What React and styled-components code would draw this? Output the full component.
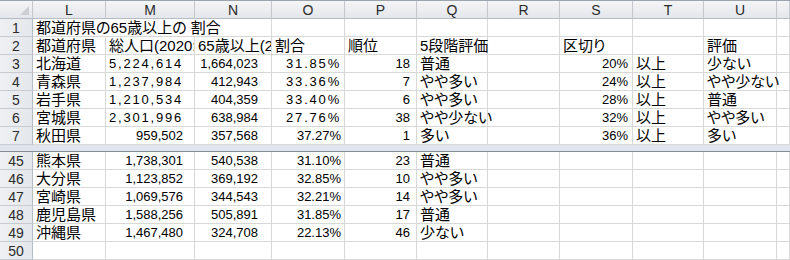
import styled, { createGlobalStyle } from "styled-components";

const COLS = "33px 73px 89px 77px 73px 72px 71px 72px 73px 71px 73px 1fr";
const LETTERS = ["L", "M", "N", "O", "P", "Q", "R", "S", "T", "U", ""];

// padding-right per column (numbers have trailing space formats in M/N)
const PAD = [3, 11, 13, 3, 6, 3, 3, 4, 3, 3, 3];

const top = [
  { n: 1, cells: [{ v: "都道府県の65歳以上の 割合", span: 3 }] },
  {
    n: 2,
    cells: [
      "都道府県",
      { v: "総人口(2020:人)", clip: true },
      { v: "65歳以上(2020:人)", clip: true },
      "割合",
      "順位",
      "5段階評価",
      "",
      "区切り",
      "",
      "評価",
      "",
    ],
  },
  { n: 3, cells: ["北海道", "5,224,614", "1,664,023", "31.85%", "18", "普通", "", "20%", "以上", "少ない", ""], wide: true },
  { n: 4, cells: ["青森県", "1,237,984", "412,943", "33.36%", "7", "やや多い", "", "24%", "以上", "やや少ない", ""], wide: true },
  { n: 5, cells: ["岩手県", "1,210,534", "404,359", "33.40%", "6", "やや多い", "", "28%", "以上", "普通", ""], wide: true },
  { n: 6, cells: ["宮城県", "2,301,996", "638,984", "27.76%", "38", "やや少ない", "", "32%", "以上", "やや多い", ""], wide: true },
  { n: 7, cells: ["秋田県", "959,502", "357,568", "37.27%", "1", "多い", "", "36%", "以上", "多い", ""] },
];

const bottom = [
  { n: 45, cells: ["熊本県", "1,738,301", "540,538", "31.10%", "23", "普通"] },
  { n: 46, cells: ["大分県", "1,123,852", "369,192", "32.85%", "10", "やや多い"] },
  { n: 47, cells: ["宮崎県", "1,069,576", "344,543", "32.21%", "14", "やや多い"] },
  { n: 48, cells: ["鹿児島県", "1,588,256", "505,891", "31.85%", "17", "普通"] },
  { n: 49, cells: ["沖縄県", "1,467,480", "324,708", "22.13%", "46", "少ない"] },
  { n: 50, cells: [] },
];

const isNum = (v) => /^[\d,.]+%?$/.test(v);

function SheetRow({ row }) {
  const out = [];
  let col = 0;
  row.cells.forEach((c, i) => {
    const cell = typeof c === "string" ? { v: c } : c;
    const num = isNum(cell.v);
    const wide = row.wide && num && (col === 1 || col === 3);
    out.push(
      <Cell
        key={i}
        $span={cell.span || 1}
        $num={num}
        $wide={wide}
        $clip={cell.clip}
        $pr={num ? PAD[col] : 3}
      >
        {cell.v}
      </Cell>
    );
    col += cell.span || 1;
  });
  while (col < LETTERS.length) {
    out.push(<Cell key={"e" + col} />);
    col++;
  }
  return (
    <Row>
      <RowHead>{row.n}</RowHead>
      {out}
    </Row>
  );
}

export default function App() {
  return (
    <>
      <GlobalStyle />
      <Sheet>
        <HeaderRow>
          <Corner />
          {LETTERS.map((l, i) => (
            <ColHead key={i}>{l}</ColHead>
          ))}
        </HeaderRow>
        {top.map((r) => (
          <SheetRow key={r.n} row={r} />
        ))}
        <SplitBar />
        {bottom.map((r) => (
          <SheetRow key={r.n} row={r} />
        ))}
      </Sheet>
    </>
  );
}

//STYLE--------------------------------------------------

const GlobalStyle = createGlobalStyle`
  * {
    margin: 0;
    padding: 0;
    box-sizing: border-box;
  }
  body {
    background: #ffffff;
    width: 790px;
    height: 260px;
    overflow: hidden;
  }
`;

const Sheet = styled.div`
  width: 790px;
  height: 260px;
  overflow: hidden;
  background: #ffffff;
  color: #000000;
`;

const HeaderRow = styled.div`
  display: grid;
  grid-template-columns: ${COLS};
  height: 19px;
  border-top: 1px solid #9ba3ad;
  background: linear-gradient(#f4f5f7, #e2e5ea);
`;

const Corner = styled.div`
  position: relative;
  border-right: 1px solid #c3c8cf;
  border-bottom: 1px solid #b5bcc6;

  &::after {
    content: "";
    position: absolute;
    right: 3px;
    bottom: 3px;
    border-style: solid;
    border-width: 0 0 9px 9px;
    border-color: transparent transparent #cbcfd4 transparent;
  }
`;

const ColHead = styled.div`
  display: flex;
  align-items: center;
  justify-content: center;
  border-right: 1px solid #c3c8cf;
  border-bottom: 1px solid #b5bcc6;
  font-family: "Liberation Sans", sans-serif;
  font-size: 14px;
  color: #2b2b2b;
`;

const Row = styled.div`
  display: grid;
  grid-template-columns: ${COLS};
  height: 18px;
`;

const RowHead = styled.div`
  display: flex;
  align-items: center;
  justify-content: center;
  background: linear-gradient(90deg, #eef0f3, #e4e7eb);
  border-right: 1px solid #b5bcc6;
  border-bottom: 1px solid #c6cbd2;
  font-family: "Liberation Sans", sans-serif;
  font-size: 14px;
  color: #2b2b2b;
`;

const Cell = styled.div`
  grid-column: span ${(p) => p.$span || 1};
  display: flex;
  align-items: flex-end;
  justify-content: ${(p) => (p.$num ? "flex-end" : "flex-start")};
  padding: 0 ${(p) => p.$pr || 3}px 0 3px;
  border-right: 1px solid #d8d8d8;
  border-bottom: 1px solid #d8d8d8;
  overflow: ${(p) => (p.$clip ? "hidden" : "visible")};
  white-space: nowrap;
  font-family: ${(p) =>
    p.$num
      ? '"Liberation Sans", sans-serif'
      : '"Liberation Sans", "Noto Sans CJK JP", sans-serif'};
  font-feature-settings: "palt";
  font-size: ${(p) => (p.$num ? "13px" : "15px")};
  line-height: 17px;
  letter-spacing: ${(p) => (p.$wide ? "1.8px" : "0")};
`;

const SplitBar = styled.div`
  height: 7px;
  background: #dfe4ed;
  border-bottom: 1px solid #878c94;
`;
